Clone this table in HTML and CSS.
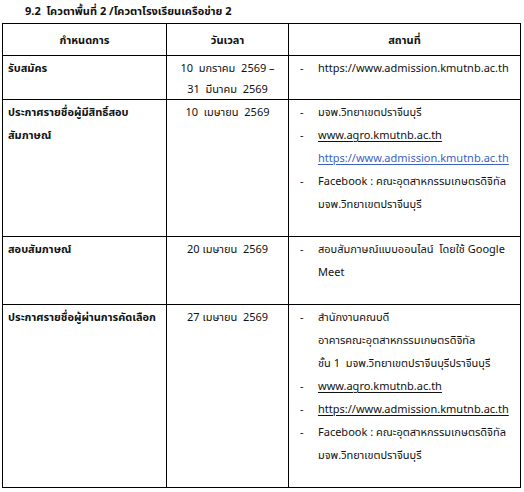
FILE: index.html
```html
<!DOCTYPE html>
<html lang="th">
<head>
<meta charset="utf-8">
<link rel="stylesheet" href="styles.css">
</head>
<body>
<h2 class="title">9.2&nbsp; โควตาพื้นที่ 2 /โควตาโรงเรียนเครือข่าย 2</h2>
<table class="sched">
  <colgroup>
    <col class="c1"><col class="c2"><col class="c3">
  </colgroup>
  <thead>
    <tr><th>กำหนดการ</th><th>วันเวลา</th><th>สถานที่</th></tr>
  </thead>
  <tbody>
    <tr>
      <td class="what">รับสมัคร</td>
      <td class="when tight">10&nbsp; มกราคม&nbsp; 2569 –<br>31&nbsp; มีนาคม&nbsp; 2569</td>
      <td class="where">
        <div class="item"><span class="dash">-</span><span>https://www.admission.kmutnb.ac.th</span></div>
      </td>
    </tr>
    <tr>
      <td class="what">ประกาศรายชื่อผู้มีสิทธิ์สอบ<br>สัมภาษณ์</td>
      <td class="when">10&nbsp; เมษายน&nbsp; 2569</td>
      <td class="where trail">
        <div class="item"><span class="dash">-</span><span>มจพ.วิทยาเขตปราจีนบุรี</span></div>
        <div class="item"><span class="dash">-</span><span><span class="link">www.agro.kmutnb.ac.th</span></span></div>
        <div class="item"><span class="dash"></span><span><span class="link blue">https://www.admission.kmutnb.ac.th</span></span></div>
        <div class="item"><span class="dash">-</span><span>Facebook : คณะอุตสาหกรรมเกษตรดิจิทัล<br>มจพ.วิทยาเขตปราจีนบุรี</span></div>
      </td>
    </tr>
    <tr>
      <td class="what">สอบสัมภาษณ์</td>
      <td class="when">20 เมษายน&nbsp; 2569</td>
      <td class="where trail">
        <div class="item"><span class="dash">-</span><span>สอบสัมภาษณ์แบบออนไลน์&nbsp; โดยใช้ Google<br>Meet</span></div>
      </td>
    </tr>
    <tr>
      <td class="what">ประกาศรายชื่อผู้ผ่านการคัดเลือก</td>
      <td class="when">27 เมษายน&nbsp; 2569</td>
      <td class="where trail">
        <div class="item"><span class="dash">-</span><span>สำนักงานคณบดี<br>อาคารคณะอุตสาหกรรมเกษตรดิจิทัล<br>ชั้น 1&nbsp; มจพ.วิทยาเขตปราจีนบุรีปราจีนบุรี</span></div>
        <div class="item"><span class="dash">-</span><span><span class="link">www.agro.kmutnb.ac.th</span></span></div>
        <div class="item"><span class="dash">-</span><span><span class="link">https://www.admission.kmutnb.ac.th</span></span></div>
        <div class="item"><span class="dash">-</span><span>Facebook : คณะอุตสาหกรรมเกษตรดิจิทัล<br>มจพ.วิทยาเขตปราจีนบุรี</span></div>
      </td>
    </tr>
  </tbody>
</table>
</body>
</html>
```
FILE: styles.css
```css
html, body {
  margin: 0;
  padding: 0;
  background: #fff;
}
body {
  font-family: "Noto Sans", "Noto Sans Thai", "Noto Sans Thai UI", "Leelawadee UI", Tahoma, sans-serif;
  font-size: 11px;
  color: #111;
}
.title {
  margin: 0;
  padding: 3px 0 0 25px;
  height: 20px;
  font-size: 11px;
  font-weight: bold;
  line-height: 16px;
}
.sched {
  margin-left: 2px;
  width: 518px;
  border-collapse: collapse;
  table-layout: fixed;
}
.c1 { width: 164px; }
.c2 { width: 122px; }
.c3 { width: 232px; }
.sched th, .sched td {
  border: 1px solid #000;
  vertical-align: top;
  line-height: 23px;
  padding: 0;
}
.sched th {
  font-weight: bold;
  text-align: center;
  height: 22px;
  padding: 4px 0 4px;
}
.what {
  font-weight: bold;
  padding-left: 5px !important;
}
.when {
  text-align: center;
}
.where {
  padding: 0 6px 0 10px !important;
}
.where.trail {
  padding-bottom: 21px !important;
}
.tight {
  line-height: 21px !important;
  padding-top: 1px !important;
}
.item {
  display: grid;
  grid-template-columns: 19px 1fr;
}
.dash {
  padding-left: 1px;
}
.link {
  text-decoration: underline;
  text-underline-offset: 2px;
}
.link.blue {
  color: #3a62c4;
}
```
